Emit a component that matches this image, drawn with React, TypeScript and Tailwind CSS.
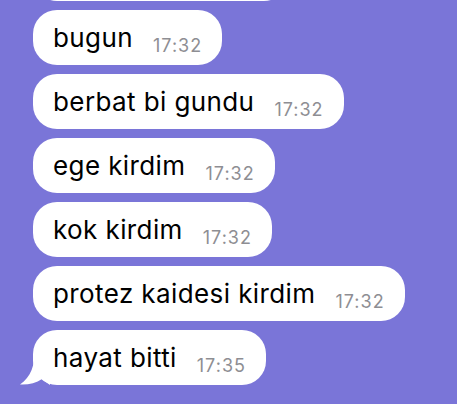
const messages = [
  { text: "bugun", time: "17:32" },
  { text: "berbat bi gundu", time: "17:32" },
  { text: "ege kirdim", time: "17:32" },
  { text: "kok kirdim", time: "17:32" },
  { text: "protez kaidesi kirdim", time: "17:32" },
  { text: "hayat bitti", time: "17:35", tail: true },
];

const Bubble = ({ text, time, tail }: { text: string; time: string; tail?: boolean }) => (
  <div className="relative self-start">
    {tail && (
      <svg
        className="absolute left-[-13px] bottom-0"
        width="30"
        height="36"
        viewBox="0 0 30 36"
      >
        <path d="M15 0 C15 16 11 28 0 35.5 C8 36 16 34 22 30 L30 36 L30 0 Z" fill="#ffffff" />
      </svg>
    )}
    <div className="relative flex h-[55px] items-center gap-[20px] rounded-[24px] bg-white px-[20px]">
      <span className="text-[26px] leading-none tracking-[0.4px] text-black">{text}</span>
      <span className="mt-[16px] text-[18px] leading-none tracking-[1px] text-[#8e8e93]">{time}</span>
    </div>
  </div>
);

export default function App() {
  return (
    <div
      className="flex h-[404px] w-[457px] flex-col gap-[9px] overflow-hidden bg-[#7a75d8] pl-[33px]"
      style={{ fontFamily: "Inter, 'Noto Sans', sans-serif" }}
    >
      <div className="-mt-[54px] h-[55px] w-[255px] shrink-0 rounded-[24px] bg-white" />
      {messages.map((m, i) => (
        <Bubble key={i} {...m} />
      ))}
    </div>
  );
}
